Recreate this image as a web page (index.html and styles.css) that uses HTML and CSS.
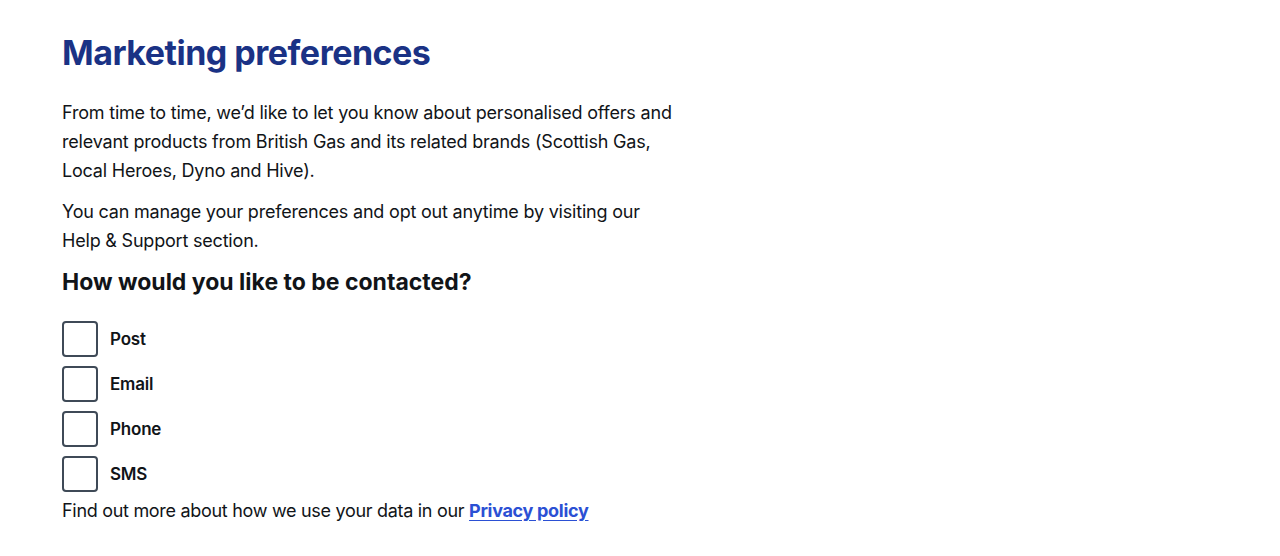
FILE: index.html
```html
<!DOCTYPE html>
<html lang="en">
<head>
<meta charset="utf-8">
<title>Marketing preferences</title>
<link rel="stylesheet" href="styles.css">
</head>
<body>
<main class="page">
  <h1 class="title">Marketing preferences</h1>
  <p class="text">From time to time, we’d like to let you know about personalised offers and relevant products from British Gas and its related brands (Scottish Gas, Local Heroes, Dyno and Hive).</p>
  <p class="text">You can manage your preferences and opt out anytime by visiting our Help &amp; Support section.</p>
  <h2 class="subtitle">How would you like to be contacted?</h2>
  <div class="options">
    <label class="option"><input type="checkbox" class="box"><span class="label">Post</span></label>
    <label class="option"><input type="checkbox" class="box"><span class="label">Email</span></label>
    <label class="option"><input type="checkbox" class="box"><span class="label">Phone</span></label>
    <label class="option"><input type="checkbox" class="box"><span class="label">SMS</span></label>
  </div>
  <p class="text foot">Find out more about how we use your data in our <a class="link" href="#">Privacy policy</a></p>
</main>
</body>
</html>
```
FILE: styles.css
```css
html, body {
  margin: 0;
  padding: 0;
  background: #ffffff;
}
body {
  font-family: Inter, "Liberation Sans", sans-serif;
  color: #111418;
}
.page {
  padding: 30px 0 0 62px;
  width: 620px;
}
.title {
  margin: 0 0 22px;
  font-size: 34px;
  line-height: 46px;
  font-weight: 700;
  letter-spacing: -0.5px;
  color: #1a3285;
}
.text {
  margin: 0 0 12px;
  font-size: 18px;
  line-height: 29px;
  letter-spacing: -0.2px;
}
.subtitle {
  margin: -1px 0 23px;
  font-size: 23px;
  line-height: 32px;
  font-weight: 700;
  letter-spacing: 0;
}
.options {
  display: flex;
  flex-direction: column;
  gap: 9px;
}
.option {
  display: flex;
  align-items: center;
  gap: 12px;
}
.box {
  appearance: none;
  -webkit-appearance: none;
  margin: 0;
  width: 36px;
  height: 36px;
  border: 2px solid #3f4a57;
  border-radius: 4px;
  background: #fff;
  box-sizing: border-box;
}
.label {
  font-size: 17px;
  font-weight: 600;
  letter-spacing: -0.2px;
}
.foot {
  margin-top: 4px;
  letter-spacing: -0.3px;
}
.link {
  color: #2b50d4;
  font-weight: 700;
  text-decoration: underline;
  text-underline-offset: 3px;
}
```
